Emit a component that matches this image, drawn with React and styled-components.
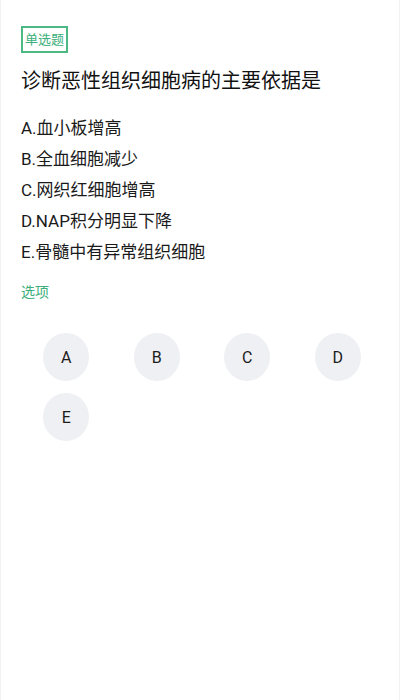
import React from "react";
import styled, { createGlobalStyle } from "styled-components";

const Global = createGlobalStyle`
  html, body { margin: 0; padding: 0; background: #fff; }
  body { font-family: Roboto, "Noto Sans CJK SC", sans-serif; }
`;

const Page = styled.div`
  box-sizing: border-box;
  width: 400px;
  min-height: 700px;
  padding: 26px 20px 0 20px;
  border-left: 1px solid #f2f2f2;
  border-right: 1px solid #f2f2f2;
  color: #1c1c1c;
`;

const Tag = styled.div`
  display: inline-block;
  border: 2px solid #4cb884;
  padding: 2px 2px;
  font-size: 13px;
  line-height: 19px;
  color: #3cb07b;
`;

const Title = styled.h1`
  margin: 13px 0 0 0;
  font-size: 20px;
  line-height: 30px;
  font-weight: 400;
  color: #111;
`;

const Options = styled.div`
  margin-top: 17px;
  display: flex;
  flex-direction: column;
`;

const Option = styled.div`
  font-size: 17px;
  line-height: 31px;
  color: #1a1a1a;
`;

const Section = styled.div`
  margin-top: 14px;
  font-size: 14px;
  line-height: 20px;
  color: #3cb07b;
`;

const Grid = styled.div`
  margin-top: 31px;
  width: 362px;
  display: grid;
  grid-template-columns: repeat(4, 1fr);
  row-gap: 12px;
  justify-items: center;
`;

const Choice = styled.button`
  width: 46px;
  height: 48px;
  border-radius: 50%;
  border: none;
  background: #eef0f3;
  font-family: Roboto, sans-serif;
  font-size: 16px;
  color: #1c1c1c;
  display: flex;
  align-items: center;
  justify-content: center;
  padding: 0;
`;

const options = [
  "A.血小板增高",
  "B.全血细胞减少",
  "C.网织红细胞增高",
  "D.NAP积分明显下降",
  "E.骨髓中有异常组织细胞",
];

export default function App() {
  return (
    <>
      <Global />
      <Page>
        <Tag>单选题</Tag>
        <Title>诊断恶性组织细胞病的主要依据是</Title>
        <Options>
          {options.map((o) => (
            <Option key={o}>{o}</Option>
          ))}
        </Options>
        <Section>选项</Section>
        <Grid>
          {["A", "B", "C", "D", "E"].map((l) => (
            <Choice key={l}>{l}</Choice>
          ))}
        </Grid>
      </Page>
    </>
  );
}
